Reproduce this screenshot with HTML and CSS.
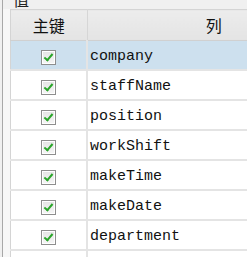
FILE: index.html
```html
<!DOCTYPE html>
<html lang="zh-CN">
<head>
    <meta charset="UTF-8">
    <title>主键</title>
    <link rel="stylesheet" href="styles.css">
</head>
<body>
<div class="panel">
    <div class="caption"><span>值</span></div>
    <div class="grid-wrap">
        <table class="grid">
            <thead>
            <tr>
                <th class="col-key">主键</th>
                <th class="col-name">列</th>
            </tr>
            </thead>
            <tbody>
            <tr class="selected">
                <td class="col-key"><span class="check"></span></td>
                <td class="col-name">company</td>
            </tr>
            <tr>
                <td class="col-key"><span class="check"></span></td>
                <td class="col-name">staffName</td>
            </tr>
            <tr>
                <td class="col-key"><span class="check"></span></td>
                <td class="col-name">position</td>
            </tr>
            <tr>
                <td class="col-key"><span class="check"></span></td>
                <td class="col-name">workShift</td>
            </tr>
            <tr>
                <td class="col-key"><span class="check"></span></td>
                <td class="col-name">makeTime</td>
            </tr>
            <tr>
                <td class="col-key"><span class="check"></span></td>
                <td class="col-name">makeDate</td>
            </tr>
            <tr>
                <td class="col-key"><span class="check"></span></td>
                <td class="col-name">department</td>
            </tr>
            <tr>
                <td class="col-key"><span class="check"></span></td>
                <td class="col-name"></td>
            </tr>
            </tbody>
        </table>
    </div>
</div>
</body>
</html>
```

FILE: styles.css
```css
html, body {
    margin: 0;
    padding: 0;
    background-color: #f0f0f0;
    overflow: hidden;
}
.panel {
    width: 247px;
    height: 257px;
    overflow: hidden;
    border-left: 2px solid #f0f0f0;
}
.caption {
    height: 9px;
    overflow: hidden;
    border-left: 1px solid #a8a8a8;
    padding-left: 10px;
    font-family: "Noto Sans CJK SC", sans-serif;
    font-size: 16px;
    line-height: 20px;
    color: #222;
}
.caption span {
    display: block;
    margin-top: -11px;
}
.grid-wrap {
    border-left: 1px solid #a8a8a8;
    padding-left: 7px;
    background-color: #f7f7f7;
    height: 248px;
    overflow: hidden;
}
.grid {
    width: 330px;
    border-collapse: collapse;
    background-color: #fff;
    border-top: 1px solid #d4d4d4;
    border-left: 1px solid #d4d4d4;
}
.grid th {
    height: 30px;
    padding: 0;
    font-family: "Noto Sans CJK SC", sans-serif;
    font-weight: normal;
    font-size: 16px;
    color: #111;
    background: linear-gradient(#ececec, #e4e4e4);
    border-bottom: 1px solid #d0d0d0;
    text-align: center;
}
.grid th.col-key {
    border-right: 1px solid #d6d6d6;
}
.grid td {
    height: 28px;
    padding: 0;
    border-bottom: 2px solid #e4e4e4;
}
.col-key {
    width: 75px;
    text-align: center;
    border-right: 2px solid #e4e4e4;
}
.grid td.col-name {
    padding: 3px 0 0 2px;
    height: 25px;
    font-family: "Liberation Mono", monospace;
    font-size: 15px;
    color: #111;
    text-align: left;
}
.grid th.col-name {
    text-align: center;
    font-family: "Noto Sans CJK SC", sans-serif;
    font-size: 16px;
}
.selected td {
    background-color: #cde0ee;
}
.check {
    display: inline-block;
    width: 13px;
    height: 13px;
    margin-top: 4px;
    border: 1px solid #8e8e8e;
    box-shadow: inset 0 0 0 1px #fff;
    background: linear-gradient(#e4e4e4, #f6f6f6);
    position: relative;
    vertical-align: middle;
}
.check::after {
    content: "";
    position: absolute;
    left: 4px;
    top: 1px;
    width: 3px;
    height: 7px;
    border-right: 2px solid #2aa52a;
    border-bottom: 2px solid #2aa52a;
    transform: rotate(40deg);
}
```
